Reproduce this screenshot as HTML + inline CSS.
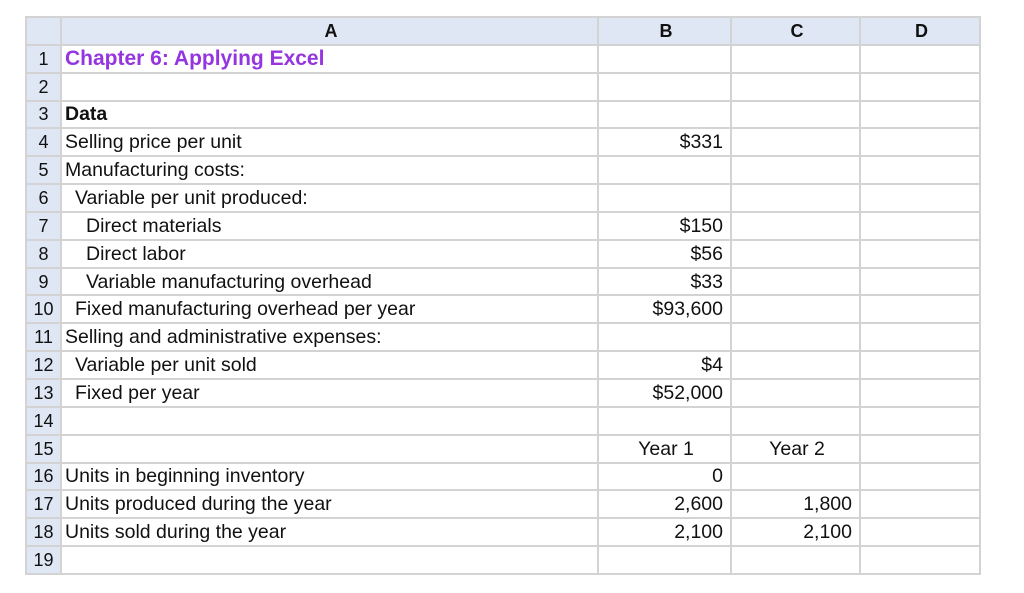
<!DOCTYPE html>
<html><head><meta charset="utf-8"><style>
html,body{margin:0;padding:0;background:#fff;width:1024px;height:593px;overflow:hidden}
table{position:absolute;left:25px;top:16px;border-collapse:collapse;table-layout:fixed;font-family:"Liberation Sans",Arial,sans-serif;font-size:19.5px;color:#111}
tr{height:27.85px}
td{border:2px solid #d3d3d3;padding:0 0 0 3px;white-space:nowrap;overflow:hidden;line-height:20px;vertical-align:middle}
tr.h td{background:#dfe7f5;font-weight:bold;text-align:center;font-size:18px}
td.n{background:#dfe7f5;text-align:center;padding:0;font-size:18px}
td.r{text-align:right;padding-right:7px}
td.c{text-align:center}
.i1{padding-left:13px}.i2{padding-left:24px}
.t{color:#9535e0;font-weight:bold;font-size:21px}
</style></head><body>
<table>
<colgroup><col style="width:35px"><col style="width:537px"><col style="width:133px"><col style="width:129px"><col style="width:120px"></colgroup>
<tr class="h"><td></td><td>A</td><td>B</td><td>C</td><td>D</td></tr>
<tr><td class="n">1</td><td class="t">Chapter 6: Applying Excel</td><td></td><td></td><td></td></tr>
<tr><td class="n">2</td><td></td><td></td><td></td><td></td></tr>
<tr><td class="n">3</td><td><b>Data</b></td><td></td><td></td><td></td></tr>
<tr><td class="n">4</td><td>Selling price per unit</td><td class="r">$331</td><td></td><td></td></tr>
<tr><td class="n">5</td><td>Manufacturing costs:</td><td></td><td></td><td></td></tr>
<tr><td class="n">6</td><td class="i1">Variable per unit produced:</td><td></td><td></td><td></td></tr>
<tr><td class="n">7</td><td class="i2">Direct materials</td><td class="r">$150</td><td></td><td></td></tr>
<tr><td class="n">8</td><td class="i2">Direct labor</td><td class="r">$56</td><td></td><td></td></tr>
<tr><td class="n">9</td><td class="i2">Variable manufacturing overhead</td><td class="r">$33</td><td></td><td></td></tr>
<tr><td class="n">10</td><td class="i1">Fixed manufacturing overhead per year</td><td class="r">$93,600</td><td></td><td></td></tr>
<tr><td class="n">11</td><td>Selling and administrative expenses:</td><td></td><td></td><td></td></tr>
<tr><td class="n">12</td><td class="i1">Variable per unit sold</td><td class="r">$4</td><td></td><td></td></tr>
<tr><td class="n">13</td><td class="i1">Fixed per year</td><td class="r">$52,000</td><td></td><td></td></tr>
<tr><td class="n">14</td><td></td><td></td><td></td><td></td></tr>
<tr><td class="n">15</td><td></td><td class="c">Year 1</td><td class="c">Year 2</td><td></td></tr>
<tr><td class="n">16</td><td>Units in beginning inventory</td><td class="r">0</td><td></td><td></td></tr>
<tr><td class="n">17</td><td>Units produced during the year</td><td class="r">2,600</td><td class="r">1,800</td><td></td></tr>
<tr><td class="n">18</td><td>Units sold during the year</td><td class="r">2,100</td><td class="r">2,100</td><td></td></tr>
<tr><td class="n">19</td><td></td><td></td><td></td><td></td></tr>
</table>
</body></html>
